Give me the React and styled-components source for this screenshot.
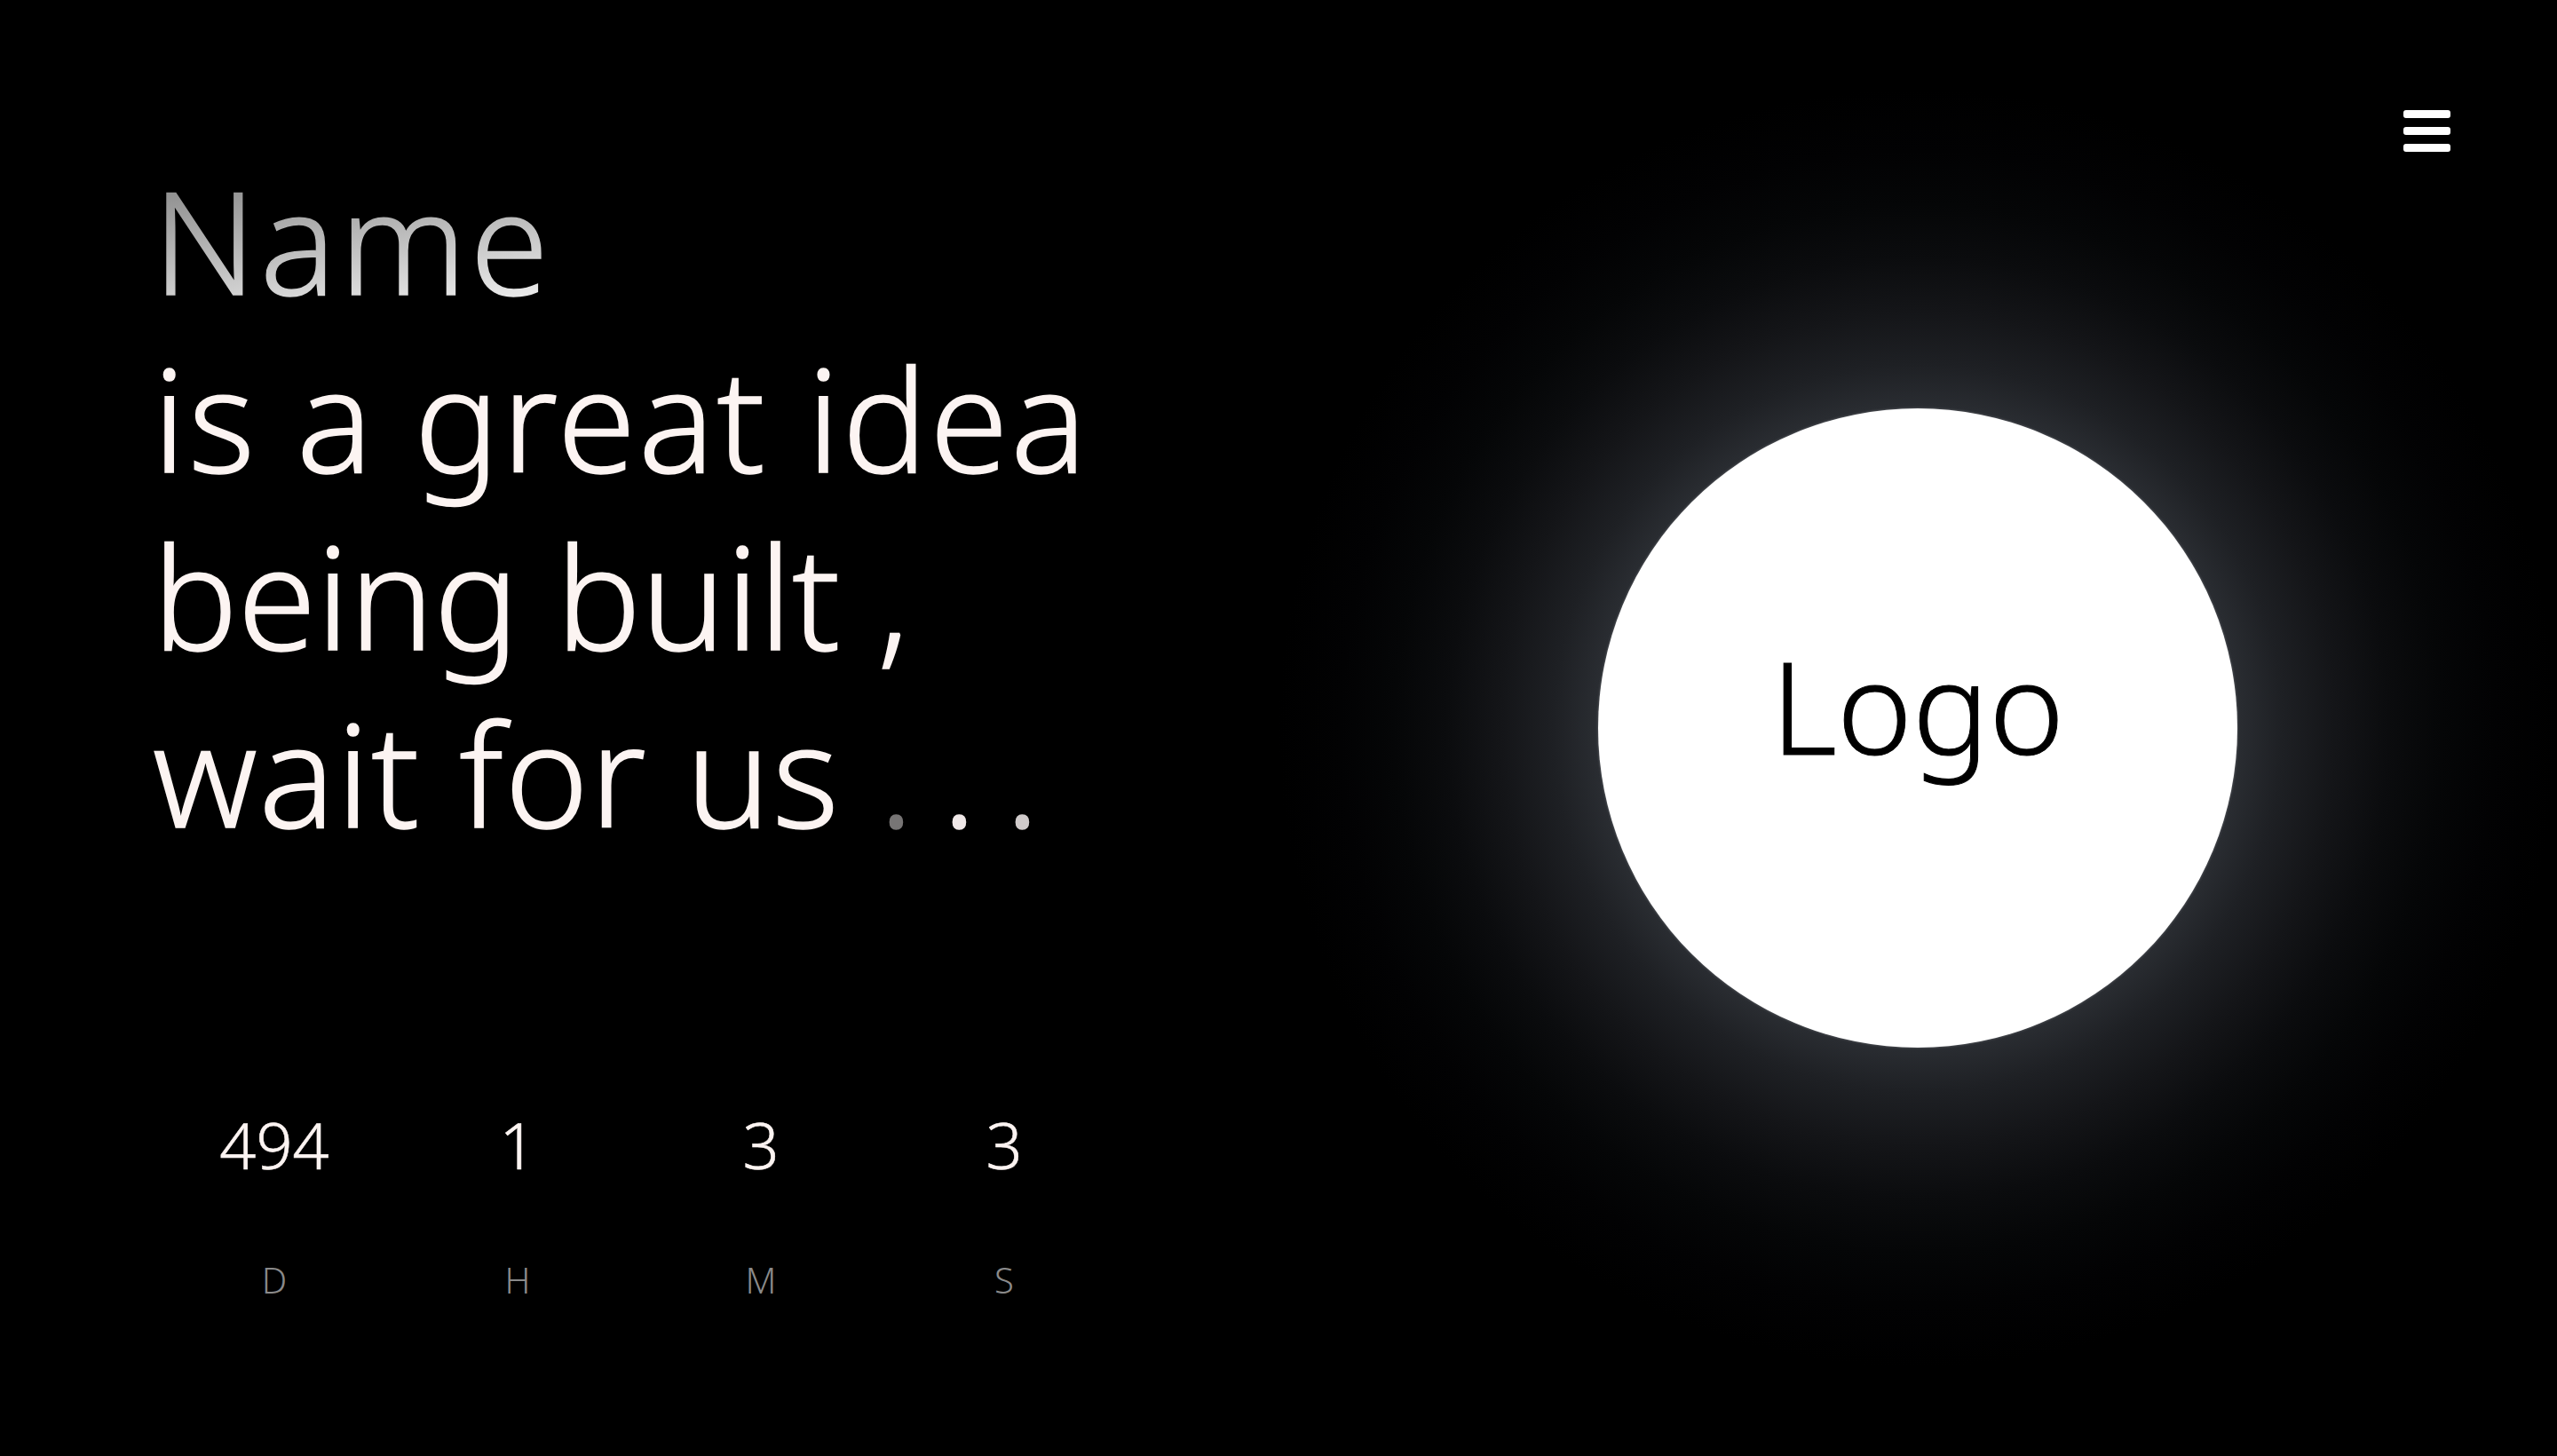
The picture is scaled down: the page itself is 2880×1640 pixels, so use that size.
import styled, { createGlobalStyle } from 'styled-components';

const GlobalStyle = createGlobalStyle`
  html, body {
    margin: 0;
    padding: 0;
    background: #000;
  }
`;

const Page = styled.div`
  position: relative;
  display: grid;
  grid-template-columns: 1fr 1fr;
  height: 1640px;
  overflow: hidden;
  background: #000;
  font-family: "Noto Sans", Inter, sans-serif;
  font-weight: 300;
  color: #fcf4f2;
`;

const MenuButton = styled.div`
  position: absolute;
  top: 124px;
  right: 120px;
  width: 53px;
  height: 47px;
  svg {
    display: block;
  }
`;

const LeftColumn = styled.div`
  padding: 170px 0 0 172px;
`;

const Headline = styled.div`
  font-size: 160px;
  line-height: 200px;
  white-space: nowrap;
  -webkit-text-stroke: 1.5px;
`;

const Line = styled.div`
  letter-spacing: ${(p) => p.$track}px;
`;

const Name = styled(Line)`
  width: fit-content;
  background: linear-gradient(172deg, #787878, #ffffff);
  -webkit-background-clip: text;
  background-clip: text;
  color: transparent;
`;

const Dots = styled.span`
  letter-spacing: 32px;
`;

const Dot = styled.span`
  color: ${(p) => p.$color};
`;

const Countdown = styled.div`
  display: grid;
  grid-template-columns: repeat(4, 274px);
  margin-top: 283px;
`;

const Cell = styled.div`
  display: flex;
  flex-direction: column;
  align-items: center;
  gap: 92px;
`;

const Value = styled.div`
  font-size: 72px;
  line-height: 72px;
  -webkit-text-stroke: 0.6px;
`;

const Unit = styled.div`
  font-size: 40px;
  line-height: 50px;
  color: #8a8a8a;
`;

const RightColumn = styled.div`
  display: flex;
  align-items: center;
  justify-content: center;
  background: radial-gradient(
    circle at center,
    #2a2d32 0,
    #2a2d32 360px,
    #1e2024 410px,
    #141518 470px,
    #0b0c0e 530px,
    #050607 590px,
    #020203 650px,
    #000 720px
  );
`;

const Circle = styled.div`
  display: flex;
  justify-content: center;
  width: 720px;
  height: 720px;
  border-radius: 50%;
  background: #fff;
  box-shadow: 0 0 3px rgba(150, 152, 156, 0.6);
`;

const Logo = styled.div`
  margin-top: 244px;
  font-size: 144px;
  line-height: 180px;
  height: 180px;
  color: #000;
  -webkit-text-stroke: 1px;
`;

const units = [
  { value: '494', unit: 'D' },
  { value: '1', unit: 'H' },
  { value: '3', unit: 'M' },
  { value: '3', unit: 'S' },
];

const App = () => (
  <Page>
    <GlobalStyle />
    <MenuButton>
      <svg width="53" height="47" viewBox="0 0 53 47" fill="#fff">
        <rect x="0" y="0" width="53" height="9" rx="3" />
        <rect x="0" y="19" width="53" height="9" rx="3" />
        <rect x="0" y="38" width="53" height="9" rx="3" />
      </svg>
    </MenuButton>
    <LeftColumn>
      <Headline>
        <Name $track={4}>Name</Name>
        <Line $track={2.7}>is a great idea</Line>
        <Line $track={0}>being built ,</Line>
        <Line $track={1.7}>
          wait for us{' '}
          <Dots>
            <Dot $color="#777575">.</Dot>
            <Dot $color="#f0e8e8">.</Dot>
            <Dot $color="#d0cbcb">.</Dot>
          </Dots>
        </Line>
      </Headline>
      <Countdown>
        {units.map((u) => (
          <Cell key={u.unit}>
            <Value>{u.value}</Value>
            <Unit>{u.unit}</Unit>
          </Cell>
        ))}
      </Countdown>
    </LeftColumn>
    <RightColumn>
      <Circle>
        <Logo>Logo</Logo>
      </Circle>
    </RightColumn>
  </Page>
);

export default App;
